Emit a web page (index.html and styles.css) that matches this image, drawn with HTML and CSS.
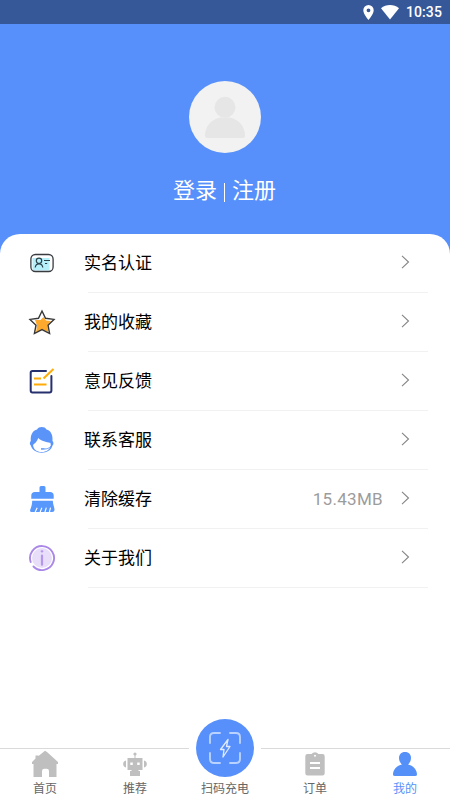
FILE: index.html
```html
<!DOCTYPE html>
<html lang="zh-CN">
<head>
<meta charset="utf-8">
<title>我的</title>
<link rel="stylesheet" href="styles.css">
</head>
<body>
<div class="app">
  <header class="status">
    <svg width="11" height="15" viewBox="0 0 11 15"><path fill="#fff" fill-rule="evenodd" d="M5.500 0A5.200 5.200 0 0 0 .3 5.200C.3 9 5.500 15 5.500 15S10.700 9 10.700 5.200A5.200 5.200 0 0 0 5.500 0Zm0 3.400a1.900 1.900 0 1 1 0 3.800a1.900 1.900 0 0 1 0-3.800Z"/></svg>
    <svg class="wifi" width="18" height="15" viewBox="0 0 18 15"><path fill="#fff" d="M0 3.300C5-1.100 13-1.100 18 3.300L9 14.500Z"/></svg>
    <span class="time">10:35</span>
  </header>
  <section class="hero">
    <div class="avatar">
      <svg width="72" height="72" viewBox="0 0 72 72"><g fill="#e6e6e6"><circle cx="36" cy="26.300" r="10.500"/><path d="M31 36.500H41C50 38.500 56 46 56 54.500Q56 57 53.500 57H18.500Q16 57 16 54.500C16 46 22 38.500 31 36.500Z"/></g></svg>
    </div>
    <div class="login"><span>登录</span><i class="bar"></i><span>注册</span></div>
  </section>
  <main class="panel">
    <div class="row">
      <svg class="icon" viewBox="0 0 28 28"><rect x="4.500" y="9" width="17" height="12.500" fill="#b5f0fa"/><rect x="2.900" y="5.500" width="22.200" height="17" rx="4.500" fill="none" stroke="#383b40" stroke-width="1.300"/><g fill="none" stroke="#2d4149" stroke-width="1.200"><circle cx="11" cy="11.800" r="2.700"/><path d="M7.200 18.500C7.500 16.200 9 14.800 11 14.800S14.500 16.200 14.800 18.500M16 11.500H22M17 14.500H19.200"/></g></svg>
      <span class="label">实名认证</span><svg class="arrow" viewBox="0 0 9 14"><path d="M1 .8L7.500 7L1 13.200"/></svg>
    </div>
    <div class="row">
      <svg class="icon" viewBox="0 0 28 28"><path fill="#fca92d" d="M7 12L12.500 12L15.500 9L18 12.500L23 13L19.300 17.200L20.500 24.500L14 21L8 24.500L9 17.500Z"/><path fill="none" stroke="#373737" stroke-width="1.400" d="M14 3L17.500 10.300L26 11.400L20 17.200L21.600 25.500L14 21.600L6.400 25.500L8 17.200L2 11.400L10.500 10.300Z"/></svg>
      <span class="label">我的收藏</span><svg class="arrow" viewBox="0 0 9 14"><path d="M1 .8L7.500 7L1 13.200"/></svg>
    </div>
    <div class="row">
      <svg class="icon" viewBox="0 0 28 28"><path fill="none" stroke="#27306e" stroke-width="2" stroke-linecap="round" d="M18 3.900H4.500Q2.700 3.900 2.700 5.700V23.500Q2.700 25.500 4.500 25.500H21.500Q23.400 25.500 23.400 23.500V9"/><path fill="none" stroke="#ffac0a" stroke-width="2" d="M6 11.500H13M6 17.500H18.500M15.500 11.500L25.500 2"/></svg>
      <span class="label">意见反馈</span><svg class="arrow" viewBox="0 0 9 14"><path d="M1 .8L7.500 7L1 13.200"/></svg>
    </div>
    <div class="row">
      <svg class="icon" viewBox="0 0 28 28"><path fill="#5b94f9" d="M2.800 19.500C1.500 18.500 1.600 16 2.800 15C2.200 8.500 5 4.500 9 3.500C10.500.2 17 .2 18.500 3.500C22.500 4.500 25 8.500 24.500 15C25.800 16 25.800 18.500 24.500 19.500C23.500 24 19 26.700 13.700 26.700S4 24 2.800 19.500Z"/><path fill="#fff" d="M5 19C6.500 17.500 9 16 10.300 12C13.500 15.500 18 15.800 22.500 17L22.800 19.500C22 23.500 18.500 26 13.700 26S5.500 23.500 5 19Z"/><path fill="none" stroke="#5b94f9" stroke-width=".9" d="M23 20C21.500 22.300 19 23.200 13 23.200M13 22.700H16.500"/></svg>
      <span class="label">联系客服</span><svg class="arrow" viewBox="0 0 9 14"><path d="M1 .8L7.500 7L1 13.200"/></svg>
    </div>
    <div class="row">
      <svg class="icon" viewBox="0 0 28 28"><path fill="#5897fb" d="M11.500 7V2.500Q11.500 1 13 1H16Q17.500 1 17.500 2.500V7H22Q25.700 7 25.700 10.500V13.700H3.300V10.500Q3.300 7 7 7ZM4.200 15.700H24.800C24.800 19 26.500 22.500 26.500 24.500Q26.500 27 24 27H3.500Q1.500 27 2.300 24.500C3.600 21.500 4.200 18 4.200 15.700Z"/><path fill="none" stroke="#fff" stroke-width="1.100" d="M7 27.500L9.200 22.700M12 27.500L13.800 22.700M16.800 27.500L18.300 22.700M21.300 27.500L22.500 22.700"/></svg>
      <span class="label">清除缓存</span><span class="size">15.43MB</span><svg class="arrow" viewBox="0 0 9 14"><path d="M1 .8L7.500 7L1 13.200"/></svg>
    </div>
    <div class="row">
      <svg class="icon" viewBox="0 0 28 28"><circle cx="14" cy="14" r="10" fill="#e8def9"/><path fill="none" stroke="#aa88e8" stroke-width="1.900" stroke-linecap="round" d="M2.700 18A12 12 0 1 1 5.500 22.500"/><path stroke="#b497ec" stroke-width="2.200" stroke-linecap="round" d="M14 11.500V20.700M13.700 7.300H14.300"/></svg>
      <span class="label">关于我们</span><svg class="arrow" viewBox="0 0 9 14"><path d="M1 .8L7.500 7L1 13.200"/></svg>
    </div>
  </main>
  <nav class="tabs">
    <div class="tab"><svg viewBox="0 0 28 28"><path fill="#bfbfbf" d="M14 .8L16 2L27 12V14H25.500V27H18V21Q18 18.700 15.500 18.700H13.500Q11 18.700 11 21V27H2.500V14H1V12L4.500 8.500V5.500H7.500V6Z"/></svg><span>首页</span></div>
    <div class="tab"><svg viewBox="0 0 28 28"><g fill="#bfbfbf"><circle cx="14" cy="4" r="1.600"/><path d="M13.500 4H14.500V9H13.500ZM5 10.500V17.500C1.200 17 1.200 11 5 10.500ZM23 10.500V17.500C26.800 17 26.800 11 23 10.500Z"/><path fill-rule="evenodd" d="M6.500 8H21.500V20H17.500V21H19V26H9V21H10.500V20H6.500ZM9.300 12.500V15H11.800V12.500ZM16.200 12.500V15H18.700V12.500Z"/></g></svg><span>推荐</span></div>
    <div class="tab scan"><div class="scan-button"><svg viewBox="0 0 58 58"><g fill="none" stroke="#b9d2ff" stroke-width="1.900" stroke-linecap="round"><path d="M14 24V18Q14 14 18 14H24M34 14H40Q44 14 44 18V24M44 34V40Q44 44 40 44H34M24 44H18Q14 44 14 40V34"/><path stroke="#e0eaff" stroke-width="1.300" stroke-linejoin="round" d="M32 20.500L24.500 30.500H28L27 38L34 27.500H30.500Z"/></g></svg></div><span>扫码充电</span></div>
    <div class="tab"><svg viewBox="0 0 28 28"><path fill="#bfbfbf" fill-rule="evenodd" d="M6.500 4H10.500Q12 2.300 14 2.300T17.500 4H21.500Q23.700 4 23.700 6.200V23.300Q23.700 25.500 21.500 25.500H6.500Q4.300 25.500 4.300 23.300V6.200Q4.300 4 6.500 4ZM14 4.800A1 1 0 1 0 14 6.800A1 1 0 1 0 14 4.800ZM9 12V14H19V12ZM9 17V19H19V17Z"/></svg><span>订单</span></div>
    <div class="tab active"><svg viewBox="0 0 28 28"><path fill="#5590f9" d="M14 2C18 2 20 4.700 20 8C20 11 18.500 13.200 17 14.500C22 15.500 26 19.500 26 24.500Q26 26 24 26H4Q2 26 2 24.500C2 19.500 6 15.500 11 14.500C9.500 13.200 8 11 8 8C8 4.700 10 2 14 2Z"/></svg><span>我的</span></div>
  </nav>
</div>
</body>
</html>
```
FILE: styles.css
```css
* { box-sizing: border-box; }
body { margin: 0; font-family: Roboto, "Noto Sans CJK SC", sans-serif; }
svg { display: block; flex: none; }
.app { width: 450px; height: 800px; display: flex; flex-direction: column; background: #fff; overflow: hidden; }
.status { height: 24px; flex: none; background: #365899; display: flex; align-items: center; justify-content: flex-end; padding-right: 8px; color: #fff; }
.wifi { margin-left: 7px; }
.time { margin-left: 7px; font-size: 14px; font-weight: 500; line-height: 24px; letter-spacing: .1px; }
.hero { height: 230px; flex: none; background: #5790fa; display: flex; flex-direction: column; align-items: center; padding-top: 57px; }
.avatar { width: 72px; height: 72px; border-radius: 50%; background: #f2f2f2; }
.login { margin-top: 22px; padding-right: 1px; display: flex; align-items: center; font-size: 22px; line-height: 32px; color: #fff; }
.bar { width: 1.5px; height: 19px; margin: 2px 7px 0 6.500px; background: #fff; }
.panel { margin-top: -20px; flex: 1; background: #fff; border-radius: 20px 20px 0 0; }
.row { height: 59px; padding: 0 40px 1px 28px; display: flex; align-items: center; background: linear-gradient(#f1f1f1, #f1f1f1) 88px 58px / 340px 1px no-repeat; }
.icon { width: 28px; height: 28px; }
.label { margin-left: 28px; flex: 1; font-size: 17px; line-height: 26px; color: #000; }
.size { font-size: 17px; letter-spacing: .3px; color: #9c9c9c; margin-right: 18px; }
.arrow { width: 9px; height: 14px; margin-bottom: 2px; fill: none; stroke: #858585; stroke-width: 1.1; }
.tabs { height: 52px; flex: none; display: flex; background: linear-gradient(#dadada, #dadada) 0 0 / 189px 1px no-repeat, linear-gradient(#dadada, #dadada) 261px 0 / 189px 1px no-repeat; }
.tab { width: 90px; height: 52px; padding-top: 2px; display: flex; flex-direction: column; align-items: center; font-size: 12px; line-height: 18px; color: #666; }
.tab > svg { width: 28px; height: 28px; margin-bottom: 2px; }
.scan { padding-top: 0; }
.scan-button { width: 58px; height: 58px; flex: none; margin-top: -29px; margin-bottom: 3px; border-radius: 50%; background: #5790fa; }
.tabs .active { color: #5790fa; }
```
